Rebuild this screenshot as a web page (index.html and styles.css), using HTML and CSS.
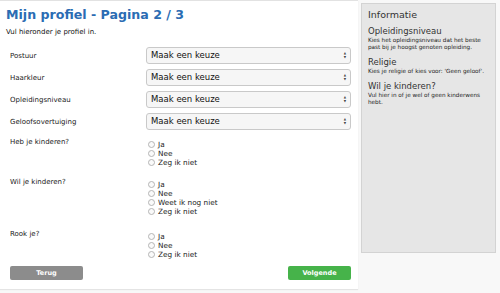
FILE: index.html
```html
<!DOCTYPE html>
<html lang="nl">
  <head>
    <meta charset="UTF-8" />
    <title>Mijn profiel</title>
    <link rel="stylesheet" href="styles.css">
  </head>
  <body>
    <div class="page">
      <section class="main">
        <h1 class="title">Mijn profiel - Pagina 2 / 3</h1>
        <p class="intro">Vul hieronder je profiel in.</p>

        <form class="form">
          <div class="row">
            <label class="label">Postuur</label>
            <div class="select">Maak een keuze<span class="arrows">&#9650;<br>&#9660;</span></div>
          </div>
          <div class="row">
            <label class="label">Haarkleur</label>
            <div class="select">Maak een keuze<span class="arrows">&#9650;<br>&#9660;</span></div>
          </div>
          <div class="row">
            <label class="label">Opleidingsniveau</label>
            <div class="select">Maak een keuze<span class="arrows">&#9650;<br>&#9660;</span></div>
          </div>
          <div class="row">
            <label class="label">Geloofsovertuiging</label>
            <div class="select">Maak een keuze<span class="arrows">&#9650;<br>&#9660;</span></div>
          </div>

          <div class="row radio-row">
            <label class="label">Heb je kinderen?</label>
            <div class="options">
              <label class="option"><span class="radio"></span>Ja</label>
              <label class="option"><span class="radio"></span>Nee</label>
              <label class="option"><span class="radio"></span>Zeg ik niet</label>
            </div>
          </div>
          <div class="row radio-row">
            <label class="label">Wil je kinderen?</label>
            <div class="options">
              <label class="option"><span class="radio"></span>Ja</label>
              <label class="option"><span class="radio"></span>Nee</label>
              <label class="option"><span class="radio"></span>Weet ik nog niet</label>
              <label class="option"><span class="radio"></span>Zeg ik niet</label>
            </div>
          </div>
          <div class="row radio-row radio-row-last">
            <label class="label">Rook je?</label>
            <div class="options">
              <label class="option"><span class="radio"></span>Ja</label>
              <label class="option"><span class="radio"></span>Nee</label>
              <label class="option"><span class="radio"></span>Zeg ik niet</label>
            </div>
          </div>

          <div class="buttons">
            <button type="button" class="btn btn-back">Terug</button>
            <button type="button" class="btn btn-next">Volgende</button>
          </div>
        </form>
      </section>

      <aside class="side">
        <div class="info">
          <h2 class="info-title">Informatie</h2>
          <h3 class="info-head">Opleidingsniveau</h3>
          <p class="info-text">Kies het opleidingsniveau dat het beste past bij je hoogst genoten opleiding.</p>
          <h3 class="info-head">Religie</h3>
          <p class="info-text">Kies je religie of kies voor: 'Geen geloof'.</p>
          <h3 class="info-head">Wil je kinderen?</h3>
          <p class="info-text">Vul hier in of je wel of geen kinderwens hebt.</p>
        </div>
      </aside>
    </div>
  </body>
</html>
```

FILE: styles.css
```css
* {
  margin: 0;
  padding: 0;
  box-sizing: border-box;
}

body {
  background-color: #f8f8f8;
  font-family: "DejaVu Sans", Verdana, sans-serif;
  color: #222;
}

.page {
  display: flex;
  gap: 3px;
  height: 293px;
}

.main {
  width: 358px;
  height: 289px;
  background-color: #fff;
  border-top: 1px solid #e2e2e2;
  padding: 5px 7px 0 6px;
  box-shadow: 0 1px 1px #e4e4e4;
}

.title {
  font-size: 12.6px;
  line-height: 18px;
  color: #2b6cb3;
}

.intro {
  font-size: 7px;
  line-height: 10px;
  margin-top: 3px;
  color: #111;
}

.form {
  margin-top: 10px;
  padding-left: 4px;
}

.row {
  display: flex;
  align-items: center;
  height: 17px;
  margin-bottom: 5px;
}

.label {
  width: 136px;
  font-size: 7px;
  color: #222;
}

.select {
  position: relative;
  width: 205px;
  height: 17px;
  border: 1px solid #c9c9c9;
  border-radius: 3px;
  background-color: #f6f6f6;
  font-size: 8.5px;
  line-height: 15px;
  padding-left: 4px;
  color: #111;
}

.arrows {
  position: absolute;
  right: 4px;
  top: 4px;
  font-size: 3px;
  line-height: 3.5px;
  color: #444;
}

.radio-row {
  height: auto;
  align-items: flex-start;
  margin-top: 10px;
  margin-bottom: 0;
}

.radio-row + .radio-row {
  margin-top: 13px;
}

.radio-row + .radio-row-last {
  margin-top: 16px;
}

.radio-row .label {
  line-height: 10px;
  margin-top: -3px;
}

.options {
  display: flex;
  flex-direction: column;
  padding-left: 2px;
}

.option {
  display: flex;
  align-items: center;
  gap: 3px;
  font-size: 7.3px;
  line-height: 9px;
  color: #222;
}

.radio {
  width: 7px;
  height: 7px;
  border: 1px solid #b5b5b5;
  border-radius: 50%;
  background-color: #fafafa;
}

.buttons {
  display: flex;
  justify-content: space-between;
  margin-top: 7px;
  width: 341px;
}

.btn {
  height: 14px;
  border: none;
  border-radius: 2px;
  color: #fff;
  font-family: "DejaVu Sans", Verdana, sans-serif;
  font-size: 6.5px;
  font-weight: bold;
}

.btn-back {
  width: 73px;
  background-color: #8c8c8c;
}

.btn-next {
  width: 63px;
  background-color: #46b34a;
}

.side {
  flex: 1;
  padding: 3px 4px 0 0;
}

.info {
  height: 250px;
  background-color: #e6e6e6;
  border: 1px solid #d3d3d3;
  padding: 4px 6px;
  color: #333;
}

.info-title {
  font-size: 9.5px;
  font-weight: normal;
  line-height: 13px;
  margin-bottom: 5px;
}

.info-head {
  font-size: 8.5px;
  font-weight: normal;
  line-height: 11px;
}

.info-text {
  font-size: 5.7px;
  line-height: 7px;
  margin-bottom: 6px;
  color: #222;
}
```
